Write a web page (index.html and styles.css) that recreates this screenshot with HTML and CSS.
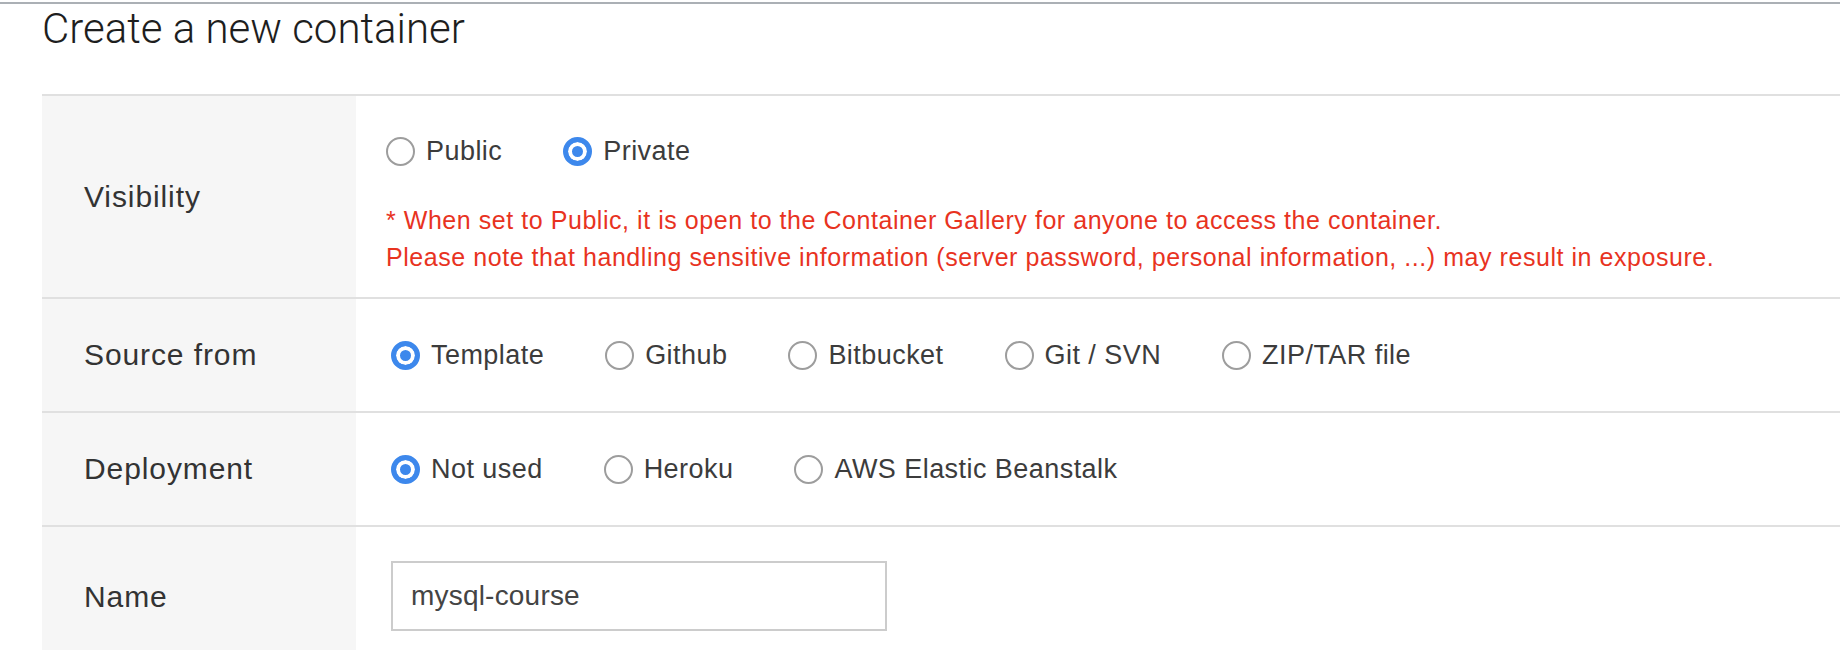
FILE: index.html
```html
<!DOCTYPE html>
<html lang="en">
<head>
<meta charset="utf-8">
<title>Create a new container</title>
<link rel="stylesheet" href="styles.css">
</head>
<body>
<div class="topline"></div>
<main class="page">
  <h1 class="title">Create a new container</h1>
  <div class="form">
    <div class="row row-visibility">
      <div class="label">Visibility</div>
      <div class="value">
        <div class="options">
          <label class="option"><span class="radio"></span><span class="opt-text">Public</span></label>
          <label class="option"><span class="radio checked"></span><span class="opt-text">Private</span></label>
        </div>
        <p class="warning">* When set to Public, it is open to the Container Gallery for anyone to access the container.<br>Please note that handling sensitive information (server password, personal information, ...) may result in exposure.</p>
      </div>
    </div>
    <div class="row row-std">
      <div class="label">Source from</div>
      <div class="value">
        <div class="options shifted">
          <label class="option"><span class="radio checked"></span><span class="opt-text">Template</span></label>
          <label class="option"><span class="radio"></span><span class="opt-text">Github</span></label>
          <label class="option"><span class="radio"></span><span class="opt-text">Bitbucket</span></label>
          <label class="option"><span class="radio"></span><span class="opt-text">Git / SVN</span></label>
          <label class="option"><span class="radio"></span><span class="opt-text">ZIP/TAR file</span></label>
        </div>
      </div>
    </div>
    <div class="row row-std">
      <div class="label">Deployment</div>
      <div class="value">
        <div class="options shifted">
          <label class="option"><span class="radio checked"></span><span class="opt-text">Not used</span></label>
          <label class="option"><span class="radio"></span><span class="opt-text">Heroku</span></label>
          <label class="option"><span class="radio"></span><span class="opt-text">AWS Elastic Beanstalk</span></label>
        </div>
      </div>
    </div>
    <div class="row row-name">
      <div class="label">Name</div>
      <div class="value">
        <input class="text-input shifted" type="text" value="mysql-course">
      </div>
    </div>
  </div>
</main>
</body>
</html>
```

FILE: styles.css
```css
* { box-sizing: border-box; }

html, body {
  margin: 0;
  padding: 0;
  background: #ffffff;
}

body {
  font-family: "Liberation Sans", Arial, sans-serif;
  color: #333333;
}

.topline {
  margin-top: 2px;
  height: 2px;
  background: #abb0b5;
}

.page {
  padding-left: 42px;
}

.title {
  margin: 0;
  padding-top: 4px;
  font-family: Roboto, "Liberation Sans", sans-serif;
  font-weight: 300;
  font-size: 42px;
  line-height: 42px;
  color: #1e1e1e;
  height: 90px;
}

.form {
  display: flex;
  flex-direction: column;
}

.row {
  display: grid;
  grid-template-columns: 314px 1fr;
  border-top: 2px solid #e0e0e0;
}

.row-visibility { height: 203px; }
.row-std { height: 114px; }
.row-name { height: 142px; }

.label {
  background: #f6f6f6;
  padding-left: 42px;
  display: flex;
  align-items: center;
  font-size: 30px;
  letter-spacing: 0.9px;
  color: #333333;
}

.value {
  padding-left: 30px;
  display: flex;
  flex-direction: column;
  justify-content: center;
}

.row-visibility .value {
  justify-content: flex-start;
  padding-top: 40px;
}

.row-name .value {
  justify-content: flex-start;
  padding-top: 34px;
}

.options {
  display: flex;
  align-items: center;
  gap: 61px;
  height: 30px;
}

.shifted { margin-left: 5px; }

.option {
  display: flex;
  align-items: center;
  gap: 11px;
  font-size: 27px;
  letter-spacing: 0.45px;
  color: #3c3c3c;
}

.radio {
  width: 29px;
  height: 29px;
  border-radius: 50%;
  border: 2px solid #9d9d9d;
  background: #ffffff;
  flex: none;
}

.radio.checked {
  border: 5px solid #3d88ec;
  background: #3d88ec;
  box-shadow: inset 0 0 0 4px #ffffff;
}

.warning {
  margin: 36px 0 0;
  font-size: 25px;
  letter-spacing: 0.55px;
  line-height: 37px;
  color: #e8331f;
}

.text-input {
  width: 496px;
  height: 70px;
  border: 2px solid #cccccc;
  padding: 0 18px;
  font-family: "Liberation Sans", Arial, sans-serif;
  font-size: 28px;
  letter-spacing: 0.2px;
  color: #444444;
  background: #ffffff;
  outline: none;
}
```
